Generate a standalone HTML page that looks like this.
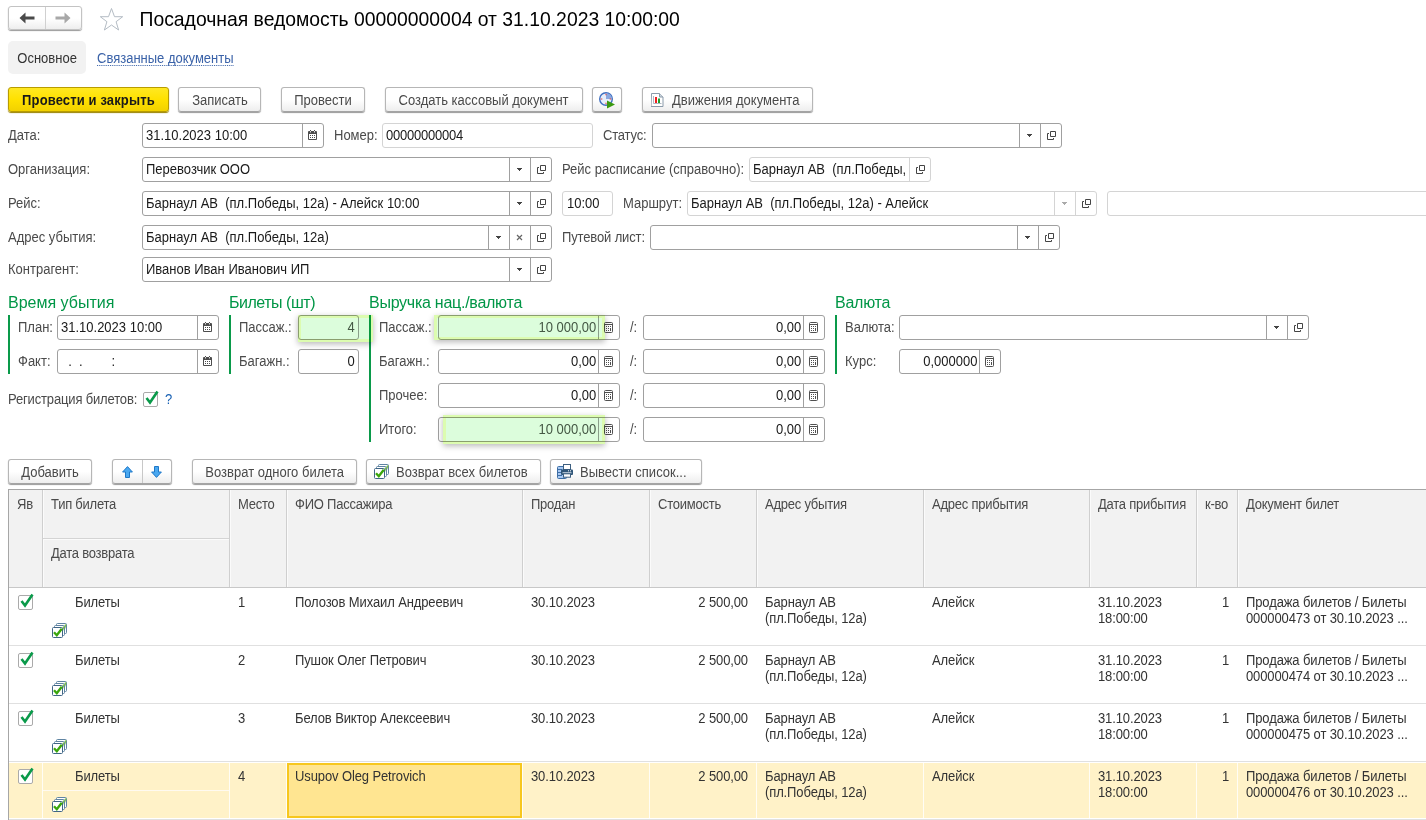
<!DOCTYPE html><html lang="ru"><head><meta charset="utf-8"><title>Посадочная ведомость</title><style>
*{box-sizing:border-box;margin:0;padding:0}
html,body{width:1426px;height:820px;overflow:hidden;background:#fff}
body{font-family:"Liberation Sans",sans-serif;font-size:14px;color:#4a4a4a;position:relative}
.a{position:absolute;white-space:nowrap}
.lbl{position:absolute;white-space:nowrap;line-height:25px;height:25px;color:#4a4a4a;transform:scaleX(.9286);transform-origin:0 50%}
.inp{position:absolute;height:25px;border:1px solid #a0a0a0;border-radius:3px;background:#fff;color:#1a1a1a;line-height:23px;white-space:nowrap;overflow:hidden}
.inp.ro{border-color:#d4d4d4}
.inp .t{position:absolute;left:3px;top:0;transform:scaleX(.9286);transform-origin:0 50%}
.inp .r{position:absolute;right:3px;top:0;transform:scaleX(.9286);transform-origin:100% 50%}
.sx{display:inline-block;transform:scaleX(.9286);transform-origin:0 50%}
.sc{display:inline-block;transform:scaleX(.9286);transform-origin:50% 50%}
.inp .d{position:absolute;top:0;bottom:0;width:1px;background:#a0a0a0}
.inp.ro .d{background:#d4d4d4}
.inp svg{position:absolute}
.btn{position:absolute;height:25px;border:1px solid #b6b6b6;border-bottom-color:#a4a4a4;border-radius:3px;background:linear-gradient(#ffffff,#ffffff 50%,#eeeeee);box-shadow:0 1px 1px #9a9a9a;color:#4a4a4a;line-height:23px;padding-top:1px;text-align:center;white-space:nowrap}
.btn.y{background:linear-gradient(#ffe822,#ffe100 50%,#f2d100);border-color:#b89c00;box-shadow:0 1px 1px #9a8200;color:#1a1a1a;font-weight:bold;letter-spacing:0.14px}
.gt{position:absolute;color:#009646;font-size:16px;letter-spacing:0;line-height:18px;white-space:nowrap}
.gl{position:absolute;width:2px;background:#0a9a4a}
.hl{position:absolute;background:#dcfddc;border:3px solid #dcfcb0;mix-blend-mode:multiply;box-shadow:0 2px 6px rgba(0,0,0,.28)}
.th{position:absolute;background:#f2f2f2;color:#4a4a4a;white-space:nowrap;line-height:16px;letter-spacing:-0.25px;transform:scaleX(.9286);transform-origin:0 50%}
.vl{position:absolute;width:1px;background:#d0d0d0}
.hline{position:absolute;height:1px;background:#e0e0e0}
.td{position:absolute;white-space:nowrap;line-height:16px;color:#333;letter-spacing:-0.12px;transform:scaleX(.9286);transform-origin:0 50%}
.cb{position:absolute;width:15px;height:15px;border:1px solid #aaa;border-radius:2px;background:#fff}
</style></head><body>
<div class="btn" style="left:8px;top:6px;width:74px;height:24px;border-color:#c3c3c3"></div>
<div class="a" style="left:45px;top:7px;width:1px;height:22px;background:#d0d0d0"></div>
<svg class="a" style="left:19px;top:12px" width="16" height="12" viewBox="0 0 16 12"><path d="M0.5 6l6-5.5v4h9v3h-9v4z" fill="#4a4a4a"/></svg>
<svg class="a" style="left:55px;top:12px" width="16" height="12" viewBox="0 0 16 12"><path d="M15.5 6l-6-5.5v4h-9v3h9v4z" fill="#a8a8a8"/></svg>
<svg class="a" style="left:99px;top:7px" width="25" height="24" viewBox="0 0 25 24"><path d="M12.5 1.5l3 8.2h8.2l-6.6 5l2.5 8.3l-7.1-5l-7.1 5l2.5-8.3l-6.6-5h8.2z" fill="#fff" stroke="#b4bcc4" stroke-width="1"/></svg>
<div class="a" id="title" style="left:139.5px;top:8px;font-size:19.35px;letter-spacing:0;line-height:22px;color:#000">Посадочная ведомость 00000000004 от 31.10.2023 10:00:00</div>
<div class="a" style="left:8px;top:41px;width:78px;height:33px;background:#f2f2f2;border-radius:5px;line-height:35px;text-align:center;color:#333"><span class="sc">Основное</span></div>
<div class="a" id="lnk" style="left:97px;top:42px;line-height:33px;color:#3a62a8"><span style="display:inline-block;line-height:13px;height:14px;border-bottom:1px dotted #3a62a8;transform:scaleX(.9286);transform-origin:0 50%">Связанные документы</span></div>
<div class="btn y" style="left:8px;top:87px;width:161px"><span class="sc">Провести и закрыть</span></div>
<div class="btn " style="left:178px;top:87px;width:83px"><span class="sc">Записать</span></div>
<div class="btn " style="left:281px;top:87px;width:84px"><span class="sc">Провести</span></div>
<div class="btn " style="left:385px;top:87px;width:198px"><span class="sc">Создать кассовый документ</span></div>
<div class="btn " style="left:592px;top:87px;width:30px"><svg style="position:absolute;left:6px;top:4px" width="17" height="17" viewBox="0 0 17 17"><circle cx="7" cy="7" r="6.300" fill="#e6eefb" stroke="#3f6fc0" stroke-width="1.400"/><path d="M7 7v-6a6 6 0 0 1 6 6z" fill="#8aa8e0"/><g fill="#f04030"><rect x="6.500" y="1.800" width="1" height="1.500"/><rect x="6.500" y="10.700" width="1" height="1.500"/><rect x="1.800" y="6.500" width="1.500" height="1"/><rect x="10.700" y="6.500" width="1.500" height="1"/></g><path d="M8 8.500l8 4l-8 4z" fill="#3a9a10"/></svg></div>
<div class="btn " style="left:642px;top:87px;width:171px;text-align:left;padding-left:29px"><svg style="position:absolute;left:8px;top:5px" width="13" height="14" viewBox="0 0 13 14"><path d="M0.500 0.500h8l3.500 3.500v9.500h-12z" fill="#fff" stroke="#8a9aaa"/><path d="M8.500 0.500v3.500h3.500" fill="#cdd5dd" stroke="#8a9aaa"/><path d="M2.500 3v7.500h8" fill="none" stroke="#9aa6b2" stroke-width=".8"/><rect x="4" y="4" width="2" height="6" fill="#f02020"/><rect x="7" y="5.500" width="2" height="4.500" fill="#20a030"/></svg><span class="sx">Движения документа</span></div>
<div class="lbl" style="left:8px;top:123px">Дата:</div>
<div class="inp" style="left:142px;top:123px;width:182px;height:25px"><span class="t">31.10.2023 10:00</span><span class="d" style="left:159px"></span><svg style="left:165px;top:6px" width="9" height="10" viewBox="0 0 9 10"><rect x="0" y="1" width="9" height="9" rx="1" fill="#4d4d4d"/><rect x="1" y="4" width="7" height="5" fill="#fff"/><rect x="2" y="0" width="1" height="1" fill="#4d4d4d"/><rect x="6" y="0" width="1" height="1" fill="#4d4d4d"/><rect x="2" y="1" width="1" height="1.500" fill="#ddd"/><rect x="6" y="1" width="1" height="1.500" fill="#ddd"/><g fill="#4d4d4d"><rect x="2" y="5" width="1" height="1"/><rect x="4" y="5" width="1" height="1"/><rect x="6" y="5" width="1" height="1"/><rect x="2" y="7" width="1" height="1"/><rect x="4" y="7" width="1" height="1"/><rect x="6" y="7" width="1" height="1"/></g></svg></div>
<div class="lbl" style="left:334px;top:123px">Номер:</div>
<div class="inp ro" style="left:382px;top:123px;width:211px;height:25px"><span class="t" style="letter-spacing:-0.25px">00000000004</span></div>
<div class="lbl" style="left:603px;top:123px;letter-spacing:-0.2px">Статус:</div>
<div class="inp" style="left:652px;top:123px;width:410px;height:25px"><span class="d" style="left:366px"></span><span class="d" style="left:387px"></span><svg style="left:374px;top:10px" width="5" height="3" viewBox="0 0 5 3"><path d="M0 0h5v1h-1v1h-1v1h-1v-1h-1v-1h-1z" fill="#444"/></svg><svg style="left:394px;top:7px" width="9" height="9" viewBox="0 0 9 9"><path d="M3.5 0.5h5v5h-5z M2 2.5h-1.500v6h6v-1.500" fill="none" stroke="#444" stroke-width="1"/></svg></div>
<div class="lbl" style="left:8px;top:157px">Организация:</div>
<div class="inp" style="left:142px;top:157px;width:410px;height:25px"><span class="t">Перевозчик ООО</span><span class="d" style="left:366px"></span><span class="d" style="left:387px"></span><svg style="left:374px;top:10px" width="5" height="3" viewBox="0 0 5 3"><path d="M0 0h5v1h-1v1h-1v1h-1v-1h-1v-1h-1z" fill="#444"/></svg><svg style="left:394px;top:7px" width="9" height="9" viewBox="0 0 9 9"><path d="M3.5 0.5h5v5h-5z M2 2.5h-1.500v6h6v-1.500" fill="none" stroke="#444" stroke-width="1"/></svg></div>
<div class="lbl" style="left:562px;top:157px">Рейс расписание (справочно):</div>
<div class="inp ro" style="left:749px;top:157px;width:182px;height:25px"><span class="t" style="width:168px;overflow:hidden;white-space:pre">Барнаул АВ  (пл.Победы, 12а) - Алейск</span><span class="d" style="left:159px"></span><svg style="left:166px;top:7px" width="9" height="9" viewBox="0 0 9 9"><path d="M3.5 0.5h5v5h-5z M2 2.5h-1.500v6h6v-1.500" fill="none" stroke="#444" stroke-width="1"/></svg></div>
<div class="lbl" style="left:8px;top:191px">Рейс:</div>
<div class="inp" style="left:142px;top:191px;width:410px;height:25px"><span class="t" style="white-space:pre">Барнаул АВ  (пл.Победы, 12а) - Алейск 10:00</span><span class="d" style="left:366px"></span><span class="d" style="left:387px"></span><svg style="left:374px;top:10px" width="5" height="3" viewBox="0 0 5 3"><path d="M0 0h5v1h-1v1h-1v1h-1v-1h-1v-1h-1z" fill="#444"/></svg><svg style="left:394px;top:7px" width="9" height="9" viewBox="0 0 9 9"><path d="M3.5 0.5h5v5h-5z M2 2.5h-1.500v6h6v-1.500" fill="none" stroke="#444" stroke-width="1"/></svg></div>
<div class="inp ro" style="left:562px;top:191px;width:51px;height:25px"><span class="t" style="left:4px">10:00</span></div>
<div class="lbl" style="left:623px;top:191px">Маршрут:</div>
<div class="inp ro" style="left:687px;top:191px;width:410px;height:25px"><span class="t" style="white-space:pre">Барнаул АВ  (пл.Победы, 12а) - Алейск</span><span class="d" style="left:366px"></span><span class="d" style="left:387px"></span><svg style="left:374px;top:10px" width="5" height="3" viewBox="0 0 5 3"><path d="M0 0h5v1h-1v1h-1v1h-1v-1h-1v-1h-1z" fill="#aaa"/></svg><svg style="left:394px;top:7px" width="9" height="9" viewBox="0 0 9 9"><path d="M3.5 0.5h5v5h-5z M2 2.5h-1.500v6h6v-1.500" fill="none" stroke="#444" stroke-width="1"/></svg></div>
<div class="inp ro" style="left:1107px;top:191px;width:340px;height:25px"></div>
<div class="lbl" style="left:8px;top:225px">Адрес убытия:</div>
<div class="inp" style="left:142px;top:225px;width:410px;height:25px"><span class="t" style="white-space:pre">Барнаул АВ  (пл.Победы, 12а)</span><span class="d" style="left:345px"></span><span class="d" style="left:366px"></span><span class="d" style="left:387px"></span><svg style="left:353px;top:10px" width="5" height="3" viewBox="0 0 5 3"><path d="M0 0h5v1h-1v1h-1v1h-1v-1h-1v-1h-1z" fill="#444"/></svg><svg style="left:373px;top:8px" width="7" height="7" viewBox="0 0 7 7"><path d="M1 1l5 5M6 1l-5 5" stroke="#666" stroke-width="1.200"/></svg><svg style="left:394px;top:7px" width="9" height="9" viewBox="0 0 9 9"><path d="M3.5 0.5h5v5h-5z M2 2.5h-1.500v6h6v-1.500" fill="none" stroke="#444" stroke-width="1"/></svg></div>
<div class="lbl" style="left:562px;top:225px;letter-spacing:-0.15px">Путевой лист:</div>
<div class="inp" style="left:650px;top:225px;width:410px;height:25px"><span class="d" style="left:366px"></span><span class="d" style="left:387px"></span><svg style="left:374px;top:10px" width="5" height="3" viewBox="0 0 5 3"><path d="M0 0h5v1h-1v1h-1v1h-1v-1h-1v-1h-1z" fill="#444"/></svg><svg style="left:394px;top:7px" width="9" height="9" viewBox="0 0 9 9"><path d="M3.5 0.5h5v5h-5z M2 2.5h-1.500v6h6v-1.500" fill="none" stroke="#444" stroke-width="1"/></svg></div>
<div class="lbl" style="left:8px;top:257px">Контрагент:</div>
<div class="inp" style="left:142px;top:257px;width:410px;height:25px"><span class="t">Иванов Иван Иванович ИП</span><span class="d" style="left:366px"></span><span class="d" style="left:387px"></span><svg style="left:374px;top:10px" width="5" height="3" viewBox="0 0 5 3"><path d="M0 0h5v1h-1v1h-1v1h-1v-1h-1v-1h-1z" fill="#444"/></svg><svg style="left:394px;top:7px" width="9" height="9" viewBox="0 0 9 9"><path d="M3.5 0.5h5v5h-5z M2 2.5h-1.500v6h6v-1.500" fill="none" stroke="#444" stroke-width="1"/></svg></div>
<div class="gt" style="left:8px;top:294px">Время убытия</div>
<div class="gl" style="left:8px;top:315px;height:59px"></div>
<div class="lbl" style="left:18px;top:315px">План:</div>
<div class="inp" style="left:57px;top:315px;width:162px;height:25px"><span class="t">31.10.2023 10:00</span><span class="d" style="left:139px"></span><svg style="left:145px;top:6px" width="9" height="10" viewBox="0 0 9 10"><rect x="0" y="1" width="9" height="9" rx="1" fill="#4d4d4d"/><rect x="1" y="4" width="7" height="5" fill="#fff"/><rect x="2" y="0" width="1" height="1" fill="#4d4d4d"/><rect x="6" y="0" width="1" height="1" fill="#4d4d4d"/><rect x="2" y="1" width="1" height="1.500" fill="#ddd"/><rect x="6" y="1" width="1" height="1.500" fill="#ddd"/><g fill="#4d4d4d"><rect x="2" y="5" width="1" height="1"/><rect x="4" y="5" width="1" height="1"/><rect x="6" y="5" width="1" height="1"/><rect x="2" y="7" width="1" height="1"/><rect x="4" y="7" width="1" height="1"/><rect x="6" y="7" width="1" height="1"/></g></svg></div>
<div class="lbl" style="left:18px;top:349px">Факт:</div>
<div class="inp" style="left:57px;top:349px;width:162px;height:25px"><span class="t" style="white-space:pre;left:3px">  .  .        :</span><span class="d" style="left:139px"></span><svg style="left:145px;top:6px" width="9" height="10" viewBox="0 0 9 10"><rect x="0" y="1" width="9" height="9" rx="1" fill="#4d4d4d"/><rect x="1" y="4" width="7" height="5" fill="#fff"/><rect x="2" y="0" width="1" height="1" fill="#4d4d4d"/><rect x="6" y="0" width="1" height="1" fill="#4d4d4d"/><rect x="2" y="1" width="1" height="1.500" fill="#ddd"/><rect x="6" y="1" width="1" height="1.500" fill="#ddd"/><g fill="#4d4d4d"><rect x="2" y="5" width="1" height="1"/><rect x="4" y="5" width="1" height="1"/><rect x="6" y="5" width="1" height="1"/><rect x="2" y="7" width="1" height="1"/><rect x="4" y="7" width="1" height="1"/><rect x="6" y="7" width="1" height="1"/></g></svg></div>
<div class="lbl" style="left:8px;top:387px;letter-spacing:-0.17px">Регистрация билетов:</div>
<div class="cb" style="left:143px;top:392px"><svg style="position:absolute;left:1px;top:-3px" width="14" height="15" viewBox="0 0 14 15"><path d="M1.5 8l3.5 4.5l7.5-11" fill="none" stroke="#0a9a4a" stroke-width="2.6"/></svg></div>
<div class="a" style="left:165px;top:387px;line-height:25px;color:#1a62b4;transform:scaleX(.9286);transform-origin:0 50%">?</div>
<div class="gt" style="left:229px;top:294px;letter-spacing:-0.47px">Билеты (шт)</div>
<div class="gl" style="left:229px;top:315px;height:59px"></div>
<div class="lbl" style="left:239px;top:315px">Пассаж.:</div>
<div class="inp" style="left:298px;top:315px;width:61px;height:25px"><span class="r" style="color:#505a50">4</span></div>
<div class="lbl" style="left:239px;top:349px">Багажн.:</div>
<div class="inp" style="left:298px;top:349px;width:61px;height:25px"><span class="r">0</span></div>
<div class="gt" style="left:369px;top:294px;letter-spacing:-0.26px">Выручка нац./валюта</div>
<div class="gl" style="left:369px;top:315px;height:127px"></div>
<div class="lbl" style="left:379px;top:315px">Пассаж.:</div>
<div class="inp" style="left:438px;top:315px;width:182px;height:25px"><span class="t" style="left:auto;right:23px;transform-origin:100% 50%;color:#505a50">10 000,00</span><span class="d" style="left:159px"></span><svg style="left:165px;top:6px" width="9" height="11" viewBox="0 0 9 11"><rect x="0.5" y="0.5" width="8" height="10" rx="1" fill="#fff" stroke="#505050"/><rect x="1" y="2" width="7" height="1" fill="#505050"/><g fill="#505050"><rect x="2" y="4" width="1" height="1"/><rect x="4" y="4" width="1" height="1"/><rect x="6" y="4" width="1" height="1"/><rect x="2" y="6" width="1" height="1"/><rect x="4" y="6" width="1" height="1"/><rect x="6" y="6" width="1" height="3"/><rect x="2" y="8" width="1" height="1"/><rect x="4" y="8" width="1" height="1"/></g></svg></div>
<div class="lbl" style="left:630px;top:315px">/:</div>
<div class="inp" style="left:643px;top:315px;width:182px;height:25px"><span class="t" style="left:auto;right:23px;transform-origin:100% 50%">0,00</span><span class="d" style="left:159px"></span><svg style="left:165px;top:6px" width="9" height="11" viewBox="0 0 9 11"><rect x="0.5" y="0.5" width="8" height="10" rx="1" fill="#fff" stroke="#505050"/><rect x="1" y="2" width="7" height="1" fill="#505050"/><g fill="#505050"><rect x="2" y="4" width="1" height="1"/><rect x="4" y="4" width="1" height="1"/><rect x="6" y="4" width="1" height="1"/><rect x="2" y="6" width="1" height="1"/><rect x="4" y="6" width="1" height="1"/><rect x="6" y="6" width="1" height="3"/><rect x="2" y="8" width="1" height="1"/><rect x="4" y="8" width="1" height="1"/></g></svg></div>
<div class="lbl" style="left:379px;top:349px">Багажн.:</div>
<div class="inp" style="left:438px;top:349px;width:182px;height:25px"><span class="t" style="left:auto;right:23px;transform-origin:100% 50%">0,00</span><span class="d" style="left:159px"></span><svg style="left:165px;top:6px" width="9" height="11" viewBox="0 0 9 11"><rect x="0.5" y="0.5" width="8" height="10" rx="1" fill="#fff" stroke="#505050"/><rect x="1" y="2" width="7" height="1" fill="#505050"/><g fill="#505050"><rect x="2" y="4" width="1" height="1"/><rect x="4" y="4" width="1" height="1"/><rect x="6" y="4" width="1" height="1"/><rect x="2" y="6" width="1" height="1"/><rect x="4" y="6" width="1" height="1"/><rect x="6" y="6" width="1" height="3"/><rect x="2" y="8" width="1" height="1"/><rect x="4" y="8" width="1" height="1"/></g></svg></div>
<div class="lbl" style="left:630px;top:349px">/:</div>
<div class="inp" style="left:643px;top:349px;width:182px;height:25px"><span class="t" style="left:auto;right:23px;transform-origin:100% 50%">0,00</span><span class="d" style="left:159px"></span><svg style="left:165px;top:6px" width="9" height="11" viewBox="0 0 9 11"><rect x="0.5" y="0.5" width="8" height="10" rx="1" fill="#fff" stroke="#505050"/><rect x="1" y="2" width="7" height="1" fill="#505050"/><g fill="#505050"><rect x="2" y="4" width="1" height="1"/><rect x="4" y="4" width="1" height="1"/><rect x="6" y="4" width="1" height="1"/><rect x="2" y="6" width="1" height="1"/><rect x="4" y="6" width="1" height="1"/><rect x="6" y="6" width="1" height="3"/><rect x="2" y="8" width="1" height="1"/><rect x="4" y="8" width="1" height="1"/></g></svg></div>
<div class="lbl" style="left:379px;top:383px">Прочее:</div>
<div class="inp" style="left:438px;top:383px;width:182px;height:25px"><span class="t" style="left:auto;right:23px;transform-origin:100% 50%">0,00</span><span class="d" style="left:159px"></span><svg style="left:165px;top:6px" width="9" height="11" viewBox="0 0 9 11"><rect x="0.5" y="0.5" width="8" height="10" rx="1" fill="#fff" stroke="#505050"/><rect x="1" y="2" width="7" height="1" fill="#505050"/><g fill="#505050"><rect x="2" y="4" width="1" height="1"/><rect x="4" y="4" width="1" height="1"/><rect x="6" y="4" width="1" height="1"/><rect x="2" y="6" width="1" height="1"/><rect x="4" y="6" width="1" height="1"/><rect x="6" y="6" width="1" height="3"/><rect x="2" y="8" width="1" height="1"/><rect x="4" y="8" width="1" height="1"/></g></svg></div>
<div class="lbl" style="left:630px;top:383px">/:</div>
<div class="inp" style="left:643px;top:383px;width:182px;height:25px"><span class="t" style="left:auto;right:23px;transform-origin:100% 50%">0,00</span><span class="d" style="left:159px"></span><svg style="left:165px;top:6px" width="9" height="11" viewBox="0 0 9 11"><rect x="0.5" y="0.5" width="8" height="10" rx="1" fill="#fff" stroke="#505050"/><rect x="1" y="2" width="7" height="1" fill="#505050"/><g fill="#505050"><rect x="2" y="4" width="1" height="1"/><rect x="4" y="4" width="1" height="1"/><rect x="6" y="4" width="1" height="1"/><rect x="2" y="6" width="1" height="1"/><rect x="4" y="6" width="1" height="1"/><rect x="6" y="6" width="1" height="3"/><rect x="2" y="8" width="1" height="1"/><rect x="4" y="8" width="1" height="1"/></g></svg></div>
<div class="lbl" style="left:379px;top:417px">Итого:</div>
<div class="inp" style="left:438px;top:417px;width:182px;height:25px"><span class="t" style="left:auto;right:23px;transform-origin:100% 50%;color:#505a50">10 000,00</span><span class="d" style="left:159px"></span><svg style="left:165px;top:6px" width="9" height="11" viewBox="0 0 9 11"><rect x="0.5" y="0.5" width="8" height="10" rx="1" fill="#fff" stroke="#505050"/><rect x="1" y="2" width="7" height="1" fill="#505050"/><g fill="#505050"><rect x="2" y="4" width="1" height="1"/><rect x="4" y="4" width="1" height="1"/><rect x="6" y="4" width="1" height="1"/><rect x="2" y="6" width="1" height="1"/><rect x="4" y="6" width="1" height="1"/><rect x="6" y="6" width="1" height="3"/><rect x="2" y="8" width="1" height="1"/><rect x="4" y="8" width="1" height="1"/></g></svg></div>
<div class="lbl" style="left:630px;top:417px">/:</div>
<div class="inp" style="left:643px;top:417px;width:182px;height:25px"><span class="t" style="left:auto;right:23px;transform-origin:100% 50%">0,00</span><span class="d" style="left:159px"></span><svg style="left:165px;top:6px" width="9" height="11" viewBox="0 0 9 11"><rect x="0.5" y="0.5" width="8" height="10" rx="1" fill="#fff" stroke="#505050"/><rect x="1" y="2" width="7" height="1" fill="#505050"/><g fill="#505050"><rect x="2" y="4" width="1" height="1"/><rect x="4" y="4" width="1" height="1"/><rect x="6" y="4" width="1" height="1"/><rect x="2" y="6" width="1" height="1"/><rect x="4" y="6" width="1" height="1"/><rect x="6" y="6" width="1" height="3"/><rect x="2" y="8" width="1" height="1"/><rect x="4" y="8" width="1" height="1"/></g></svg></div>
<div class="gt" style="left:835px;top:294px;letter-spacing:-0.25px">Валюта</div>
<div class="gl" style="left:835px;top:315px;height:59px"></div>
<div class="lbl" style="left:845px;top:315px">Валюта:</div>
<div class="inp" style="left:899px;top:315px;width:410px;height:25px"><span class="d" style="left:366px"></span><span class="d" style="left:387px"></span><svg style="left:374px;top:10px" width="5" height="3" viewBox="0 0 5 3"><path d="M0 0h5v1h-1v1h-1v1h-1v-1h-1v-1h-1z" fill="#444"/></svg><svg style="left:394px;top:7px" width="9" height="9" viewBox="0 0 9 9"><path d="M3.5 0.5h5v5h-5z M2 2.5h-1.500v6h6v-1.500" fill="none" stroke="#444" stroke-width="1"/></svg></div>
<div class="lbl" style="left:845px;top:349px">Курс:</div>
<div class="inp" style="left:899px;top:349px;width:102px;height:25px"><span class="t" style="left:auto;right:23px;transform-origin:100% 50%">0,000000</span><span class="d" style="left:79px"></span><svg style="left:85px;top:6px" width="9" height="11" viewBox="0 0 9 11"><rect x="0.5" y="0.5" width="8" height="10" rx="1" fill="#fff" stroke="#505050"/><rect x="1" y="2" width="7" height="1" fill="#505050"/><g fill="#505050"><rect x="2" y="4" width="1" height="1"/><rect x="4" y="4" width="1" height="1"/><rect x="6" y="4" width="1" height="1"/><rect x="2" y="6" width="1" height="1"/><rect x="4" y="6" width="1" height="1"/><rect x="6" y="6" width="1" height="3"/><rect x="2" y="8" width="1" height="1"/><rect x="4" y="8" width="1" height="1"/></g></svg></div>
<div class="btn " style="left:8px;top:459px;width:84px"><span class="sc">Добавить</span></div>
<div class="btn " style="left:112px;top:459px;width:60px"><svg style="position:absolute;left:9px;top:6px" width="11" height="12" viewBox="0 0 11 12"><path d="M5.500 0.600l4.900 5.400h-2.900v5.500h-4v-5.500h-2.900z" fill="#4aa8f0" stroke="#1f78c8"/></svg><svg style="position:absolute;left:38px;top:6px" width="11" height="12" viewBox="0 0 11 12"><path d="M5.500 11.400l4.900-5.400h-2.900v-5.500h-4v5.500h-2.900z" fill="#4aa8f0" stroke="#1f78c8"/></svg><span style="position:absolute;left:29px;top:0;bottom:0;width:1px;background:#c8c8c8"></span></div>
<div class="btn " style="left:192px;top:459px;width:165px"><span class="sc">Возврат одного билета</span></div>
<div class="btn " style="left:366px;top:459px;width:175px;text-align:left;padding-left:29px"><svg style="position:absolute;left:7px;top:4px" width="15" height="15" viewBox="0 0 15 15"><rect x="4.5" y="0.5" width="10" height="10" rx="1" fill="#fff" stroke="#5f84a2"/><path d="M12.2 6l1.600-4.500" stroke="#7cc04a" stroke-width="1.600" fill="none"/><rect x="2.5" y="2.5" width="10" height="10" rx="1" fill="#fff" stroke="#5f84a2"/><path d="M10.200 8l1.600-4.500" stroke="#7cc04a" stroke-width="1.600" fill="none"/><rect x="0.5" y="4.5" width="10" height="10" rx="1" fill="#fff" stroke="#3f6585"/><path d="M2 9.200l2.800 3l5-6.500" fill="none" stroke="#3aa60c" stroke-width="2.400"/></svg><span class="sx">Возврат всех билетов</span></div>
<div class="btn " style="left:550px;top:459px;width:152px;text-align:left;padding-left:29px"><svg style="position:absolute;left:6px;top:4px" width="16" height="15" viewBox="0 0 16 15"><rect x="0.5" y="2.5" width="9" height="12" rx="1" fill="#a9c9f2" stroke="#3d6ea5"/><path d="M1 5.500h4M1 8.500h4M1 11.500h4" stroke="#3d6ea5"/><rect x="6.500" y="0.500" width="7" height="5" fill="#fff" stroke="#3d5f80"/><rect x="4" y="5.500" width="12" height="5.500" rx="1" fill="#2f5578"/><rect x="11" y="6.300" width="1" height="1" fill="#fff"/><rect x="13" y="6.300" width="1" height="1" fill="#fff"/><rect x="5.500" y="8.300" width="9" height="1" fill="#dfe7ef"/><rect x="6.500" y="9.800" width="7" height="3.400" fill="#fff" stroke="#3d5f80"/></svg><span class="sx">Вывести список...</span></div>
<div class="a" style="left:8px;top:489px;width:1420px;height:340px;border:1px solid #a6a6a6;border-right:0;background:#fff"></div>
<div class="a" style="left:9px;top:490px;width:1417px;height:97px;background:#f2f2f2"></div>
<div class="hline" style="left:9px;top:587px;width:1417px;background:#c8c8c8"></div>
<div class="vl" style="left:42px;top:490px;height:97px;background:#cfcfcf"></div>
<div class="vl" style="left:43px;top:490px;height:97px;background:#fbfbfb"></div>
<div class="vl" style="left:229px;top:490px;height:97px;background:#cfcfcf"></div>
<div class="vl" style="left:230px;top:490px;height:97px;background:#fbfbfb"></div>
<div class="vl" style="left:286px;top:490px;height:97px;background:#cfcfcf"></div>
<div class="vl" style="left:287px;top:490px;height:97px;background:#fbfbfb"></div>
<div class="vl" style="left:522px;top:490px;height:97px;background:#cfcfcf"></div>
<div class="vl" style="left:523px;top:490px;height:97px;background:#fbfbfb"></div>
<div class="vl" style="left:649px;top:490px;height:97px;background:#cfcfcf"></div>
<div class="vl" style="left:650px;top:490px;height:97px;background:#fbfbfb"></div>
<div class="vl" style="left:756px;top:490px;height:97px;background:#cfcfcf"></div>
<div class="vl" style="left:757px;top:490px;height:97px;background:#fbfbfb"></div>
<div class="vl" style="left:923px;top:490px;height:97px;background:#cfcfcf"></div>
<div class="vl" style="left:924px;top:490px;height:97px;background:#fbfbfb"></div>
<div class="vl" style="left:1089px;top:490px;height:97px;background:#cfcfcf"></div>
<div class="vl" style="left:1090px;top:490px;height:97px;background:#fbfbfb"></div>
<div class="vl" style="left:1196px;top:490px;height:97px;background:#cfcfcf"></div>
<div class="vl" style="left:1197px;top:490px;height:97px;background:#fbfbfb"></div>
<div class="vl" style="left:1237px;top:490px;height:97px;background:#cfcfcf"></div>
<div class="vl" style="left:1238px;top:490px;height:97px;background:#fbfbfb"></div>
<div class="hline" style="left:43px;top:538px;width:186px;background:#d4d4d4"></div>
<div class="hline" style="left:43px;top:539px;width:186px;background:#fbfbfb"></div>
<div class="th" style="left:17px;top:496px;background:none">Яв</div>
<div class="th" style="left:51px;top:496px;background:none">Тип билета</div>
<div class="th" style="left:238px;top:496px;background:none">Место</div>
<div class="th" style="left:295px;top:496px;background:none">ФИО Пассажира</div>
<div class="th" style="left:531px;top:496px;background:none">Продан</div>
<div class="th" style="left:658px;top:496px;background:none">Стоимость</div>
<div class="th" style="left:765px;top:496px;background:none">Адрес убытия</div>
<div class="th" style="left:932px;top:496px;background:none">Адрес прибытия</div>
<div class="th" style="left:1098px;top:496px;background:none">Дата прибытия</div>
<div class="th" style="left:1205px;top:496px;background:none">к-во</div>
<div class="th" style="left:1246px;top:496px;background:none">Документ билет</div>
<div class="th" style="left:51px;top:545px;background:none">Дата возврата</div>
<div class="hline" style="left:9px;top:645px;width:1417px"></div>
<div class="cb" style="left:18px;top:595px"><svg style="position:absolute;left:1px;top:-3px" width="14" height="15" viewBox="0 0 14 15"><path d="M1.5 8l3.5 4.5l7.5-11" fill="none" stroke="#0a9a4a" stroke-width="2.6"/></svg></div>
<div class="td" style="left:75px;top:594px">Билеты</div>
<svg class="a" style="left:52px;top:623px" width="15" height="15" viewBox="0 0 15 15"><rect x="4.5" y="0.5" width="10" height="10" rx="1" fill="#fff" stroke="#5f84a2"/><path d="M12.2 6l1.600-4.500" stroke="#7cc04a" stroke-width="1.600" fill="none"/><rect x="2.5" y="2.5" width="10" height="10" rx="1" fill="#fff" stroke="#5f84a2"/><path d="M10.200 8l1.600-4.500" stroke="#7cc04a" stroke-width="1.600" fill="none"/><rect x="0.5" y="4.5" width="10" height="10" rx="1" fill="#fff" stroke="#3f6585"/><path d="M2 9.200l2.800 3l5-6.500" fill="none" stroke="#3aa60c" stroke-width="2.400"/></svg>
<div class="td" style="left:238px;top:594px">1</div>
<div class="td" style="left:295px;top:594px">Полозов Михаил Андреевич</div>
<div class="td" style="left:531px;top:594px">30.10.2023</div>
<div class="td" style="left:650px;width:98px;text-align:right;transform-origin:100% 50%;top:594px">2 500,00</div>
<div class="td" style="left:765px;top:594px">Барнаул АВ<br>(пл.Победы, 12а)</div>
<div class="td" style="left:932px;top:594px">Алейск</div>
<div class="td" style="left:1098px;top:594px">31.10.2023<br>18:00:00</div>
<div class="td" style="left:1197px;width:32px;text-align:right;transform-origin:100% 50%;top:594px">1</div>
<div class="td" style="left:1246px;top:594px">Продажа билетов / Билеты<br>000000473 от 30.10.2023 ...</div>
<div class="hline" style="left:9px;top:703px;width:1417px"></div>
<div class="cb" style="left:18px;top:653px"><svg style="position:absolute;left:1px;top:-3px" width="14" height="15" viewBox="0 0 14 15"><path d="M1.5 8l3.5 4.5l7.5-11" fill="none" stroke="#0a9a4a" stroke-width="2.6"/></svg></div>
<div class="td" style="left:75px;top:652px">Билеты</div>
<svg class="a" style="left:52px;top:681px" width="15" height="15" viewBox="0 0 15 15"><rect x="4.5" y="0.5" width="10" height="10" rx="1" fill="#fff" stroke="#5f84a2"/><path d="M12.2 6l1.600-4.500" stroke="#7cc04a" stroke-width="1.600" fill="none"/><rect x="2.5" y="2.5" width="10" height="10" rx="1" fill="#fff" stroke="#5f84a2"/><path d="M10.200 8l1.600-4.500" stroke="#7cc04a" stroke-width="1.600" fill="none"/><rect x="0.5" y="4.5" width="10" height="10" rx="1" fill="#fff" stroke="#3f6585"/><path d="M2 9.200l2.800 3l5-6.500" fill="none" stroke="#3aa60c" stroke-width="2.400"/></svg>
<div class="td" style="left:238px;top:652px">2</div>
<div class="td" style="left:295px;top:652px">Пушок Олег Петрович</div>
<div class="td" style="left:531px;top:652px">30.10.2023</div>
<div class="td" style="left:650px;width:98px;text-align:right;transform-origin:100% 50%;top:652px">2 500,00</div>
<div class="td" style="left:765px;top:652px">Барнаул АВ<br>(пл.Победы, 12а)</div>
<div class="td" style="left:932px;top:652px">Алейск</div>
<div class="td" style="left:1098px;top:652px">31.10.2023<br>18:00:00</div>
<div class="td" style="left:1197px;width:32px;text-align:right;transform-origin:100% 50%;top:652px">1</div>
<div class="td" style="left:1246px;top:652px">Продажа билетов / Билеты<br>000000474 от 30.10.2023 ...</div>
<div class="hline" style="left:9px;top:761px;width:1417px"></div>
<div class="cb" style="left:18px;top:711px"><svg style="position:absolute;left:1px;top:-3px" width="14" height="15" viewBox="0 0 14 15"><path d="M1.5 8l3.5 4.5l7.5-11" fill="none" stroke="#0a9a4a" stroke-width="2.6"/></svg></div>
<div class="td" style="left:75px;top:710px">Билеты</div>
<svg class="a" style="left:52px;top:739px" width="15" height="15" viewBox="0 0 15 15"><rect x="4.5" y="0.5" width="10" height="10" rx="1" fill="#fff" stroke="#5f84a2"/><path d="M12.2 6l1.600-4.500" stroke="#7cc04a" stroke-width="1.600" fill="none"/><rect x="2.5" y="2.5" width="10" height="10" rx="1" fill="#fff" stroke="#5f84a2"/><path d="M10.200 8l1.600-4.500" stroke="#7cc04a" stroke-width="1.600" fill="none"/><rect x="0.5" y="4.5" width="10" height="10" rx="1" fill="#fff" stroke="#3f6585"/><path d="M2 9.200l2.800 3l5-6.500" fill="none" stroke="#3aa60c" stroke-width="2.400"/></svg>
<div class="td" style="left:238px;top:710px">3</div>
<div class="td" style="left:295px;top:710px">Белов Виктор Алексеевич</div>
<div class="td" style="left:531px;top:710px">30.10.2023</div>
<div class="td" style="left:650px;width:98px;text-align:right;transform-origin:100% 50%;top:710px">2 500,00</div>
<div class="td" style="left:765px;top:710px">Барнаул АВ<br>(пл.Победы, 12а)</div>
<div class="td" style="left:932px;top:710px">Алейск</div>
<div class="td" style="left:1098px;top:710px">31.10.2023<br>18:00:00</div>
<div class="td" style="left:1197px;width:32px;text-align:right;transform-origin:100% 50%;top:710px">1</div>
<div class="td" style="left:1246px;top:710px">Продажа билетов / Билеты<br>000000475 от 30.10.2023 ...</div>
<div class="a" style="left:9px;top:763px;width:1417px;height:55px;background:#fff2c8"></div>
<div class="vl" style="left:42px;top:763px;height:55px;background:#fffdf5"></div>
<div class="vl" style="left:229px;top:763px;height:55px;background:#fffdf5"></div>
<div class="vl" style="left:286px;top:763px;height:55px;background:#fffdf5"></div>
<div class="vl" style="left:522px;top:763px;height:55px;background:#fffdf5"></div>
<div class="vl" style="left:649px;top:763px;height:55px;background:#fffdf5"></div>
<div class="vl" style="left:756px;top:763px;height:55px;background:#fffdf5"></div>
<div class="vl" style="left:923px;top:763px;height:55px;background:#fffdf5"></div>
<div class="vl" style="left:1089px;top:763px;height:55px;background:#fffdf5"></div>
<div class="vl" style="left:1196px;top:763px;height:55px;background:#fffdf5"></div>
<div class="vl" style="left:1237px;top:763px;height:55px;background:#fffdf5"></div>
<div class="hline" style="left:43px;top:790px;width:186px;background:#fffaf0"></div>
<div class="a" style="left:287px;top:763px;width:235px;height:55px;background:#ffe591;border:2px solid #f7c71e"></div>
<div class="hline" style="left:9px;top:819px;width:1417px"></div>
<div class="cb" style="left:18px;top:769px"><svg style="position:absolute;left:1px;top:-3px" width="14" height="15" viewBox="0 0 14 15"><path d="M1.5 8l3.5 4.5l7.5-11" fill="none" stroke="#0a9a4a" stroke-width="2.6"/></svg></div>
<div class="td" style="left:75px;top:768px">Билеты</div>
<svg class="a" style="left:52px;top:797px" width="15" height="15" viewBox="0 0 15 15"><rect x="4.5" y="0.5" width="10" height="10" rx="1" fill="#fff" stroke="#5f84a2"/><path d="M12.2 6l1.600-4.500" stroke="#7cc04a" stroke-width="1.600" fill="none"/><rect x="2.5" y="2.5" width="10" height="10" rx="1" fill="#fff" stroke="#5f84a2"/><path d="M10.200 8l1.600-4.500" stroke="#7cc04a" stroke-width="1.600" fill="none"/><rect x="0.5" y="4.5" width="10" height="10" rx="1" fill="#fff" stroke="#3f6585"/><path d="M2 9.200l2.800 3l5-6.500" fill="none" stroke="#3aa60c" stroke-width="2.400"/></svg>
<div class="td" style="left:238px;top:768px">4</div>
<div class="td" style="left:295px;top:768px">Usupov Oleg Petrovich</div>
<div class="td" style="left:531px;top:768px">30.10.2023</div>
<div class="td" style="left:650px;width:98px;text-align:right;transform-origin:100% 50%;top:768px">2 500,00</div>
<div class="td" style="left:765px;top:768px">Барнаул АВ<br>(пл.Победы, 12а)</div>
<div class="td" style="left:932px;top:768px">Алейск</div>
<div class="td" style="left:1098px;top:768px">31.10.2023<br>18:00:00</div>
<div class="td" style="left:1197px;width:32px;text-align:right;transform-origin:100% 50%;top:768px">1</div>
<div class="td" style="left:1246px;top:768px">Продажа билетов / Билеты<br>000000476 от 30.10.2023 ...</div>
<div class="hl" style="left:298px;top:315px;width:75px;height:27px"></div>
<div class="hl" style="left:434px;top:315px;width:171px;height:25px"></div>
<div class="hl" style="left:443px;top:415px;width:162px;height:29px"></div>
</body></html>
